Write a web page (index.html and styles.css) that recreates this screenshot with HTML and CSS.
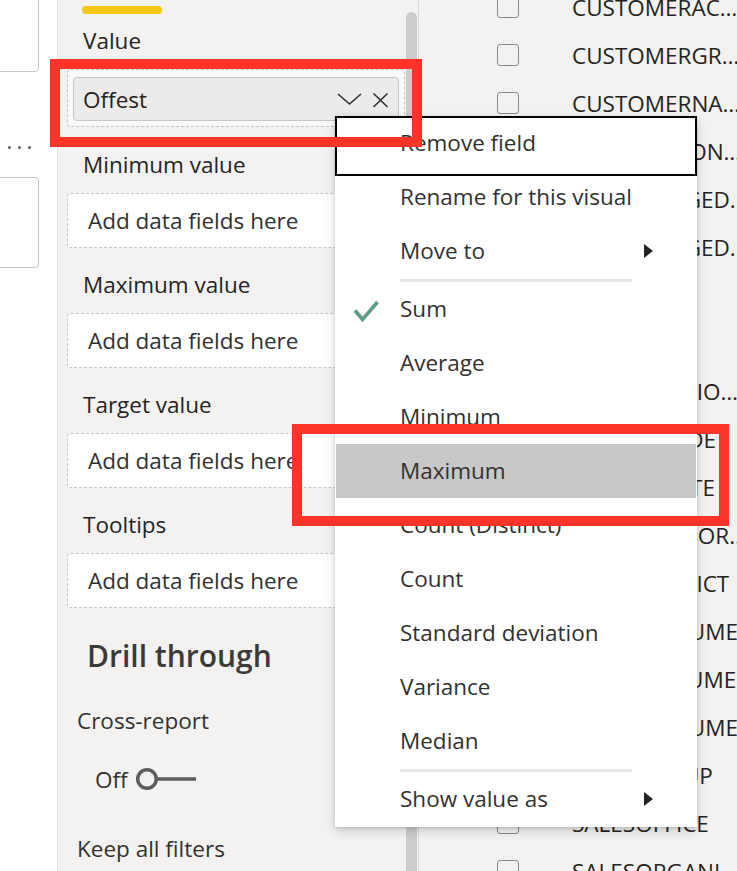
FILE: index.html
```html
<!DOCTYPE html>
<html lang="en">
<head>
<meta charset="utf-8">
<title>Field well menu</title>
<link rel="stylesheet" href="styles.css">
</head>
<body>
<div class="app">
  <aside class="strip">
    <div class="card card-top"></div>
    <div class="dots"><span></span><span></span><span></span></div>
    <div class="card card-bottom"></div>
  </aside>

  <section class="panel">
    <div class="panel-body">
      <div class="accent"></div>
      <div class="label label-first">Value</div>
      <div class="well well-filled">
        <div class="pill">
          <span class="pill-text">Offest</span>
          <svg class="pill-icons" width="52" height="18" viewBox="0 0 52 18">
            <polyline points="1,4 12.5,14 24,4" fill="none" stroke="#323130" stroke-width="1.6"/>
            <path d="M36.5 3.5 L50.5 17 M50.5 3.5 L36.5 17" stroke="#323130" stroke-width="1.6" fill="none"/>
          </svg>
        </div>
      </div>
      <div class="label">Minimum value</div>
      <div class="well">Add data fields here</div>
      <div class="label">Maximum value</div>
      <div class="well">Add data fields here</div>
      <div class="label">Target value</div>
      <div class="well">Add data fields here</div>
      <div class="label">Tooltips</div>
      <div class="well">Add data fields here</div>

      <div class="heading">Drill through</div>
      <div class="sublabel">Cross-report</div>
      <div class="toggle">
        <span class="toggle-text">Off</span>
        <svg width="62" height="24" viewBox="0 0 62 24">
          <circle cx="12" cy="12" r="9.3" fill="none" stroke="#605e5c" stroke-width="3.5"/>
          <line x1="21" y1="12" x2="61" y2="12" stroke="#605e5c" stroke-width="3.5"/>
        </svg>
      </div>
      <div class="sublabel sublabel-keep">Keep all filters</div>
    </div>
    <div class="scroll"><div class="thumb"></div></div>
  </section>

  <section class="fields">
    <ul class="field-list">
      <li class="field"><span class="box"></span><span class="name">CUSTOMERAC…</span></li>
      <li class="field"><span class="box"></span><span class="name">CUSTOMERGR…</span></li>
      <li class="field"><span class="box"></span><span class="name">CUSTOMERNA…</span></li>
      <li class="field"><span class="box"></span><span class="name">DISTRIBUTION…</span></li>
      <li class="field"><span class="box"></span><span class="name">LASTCHANGED…</span></li>
      <li class="field"><span class="box"></span><span class="name">LASTCHANGED…</span></li>
      <li class="field"><span class="box"></span><span class="name">MATERIAL</span></li>
      <li class="field"><span class="box"></span><span class="name">MONTH</span></li>
      <li class="field"><span class="box"></span><span class="name">ORGANIZATIO…</span></li>
      <li class="field"><span class="box"></span><span class="name">REGIONCODE</span></li>
      <li class="field"><span class="box"></span><span class="name">PRICINGDATE</span></li>
      <li class="field"><span class="box"></span><span class="name">SALESADVISOR…</span></li>
      <li class="field"><span class="box"></span><span class="name">SALESDISTRICT</span></li>
      <li class="field"><span class="box"></span><span class="name">ORDERVOLUME</span></li>
      <li class="field"><span class="box"></span><span class="name">GROSSVOLUME</span></li>
      <li class="field"><span class="box"></span><span class="name">ORDERVOLUME</span></li>
      <li class="field"><span class="box"></span><span class="name">SALESGROUP</span></li>
      <li class="field"><span class="box"></span><span class="name">SALESOFFICE</span></li>
      <li class="field"><span class="box"></span><span class="name">SALESORGANI…</span></li>
    </ul>
  </section>
</div>

<div class="menu">
  <div class="item item-focus">Remove field</div>
  <div class="item">Rename for this visual</div>
  <div class="item">Move to<span class="arrow"></span></div>
  <div class="sep"></div>
  <div class="item">
    <svg class="check" width="28" height="24" viewBox="0 0 28 24">
      <polyline points="3,11.5 10.5,20.5 25.5,3" fill="none" stroke="#5e9e89" stroke-width="3.6"/>
    </svg>Sum
  </div>
  <div class="item">Average</div>
  <div class="item">Minimum</div>
  <div class="item item-active">Maximum</div>
  <div class="item">Count (Distinct)</div>
  <div class="item">Count</div>
  <div class="item">Standard deviation</div>
  <div class="item">Variance</div>
  <div class="item">Median</div>
  <div class="sep"></div>
  <div class="item">Show value as<span class="arrow"></span></div>
</div>

<div class="mark mark-value"></div>
<div class="mark mark-max"></div>
</body>
</html>
```
FILE: styles.css
```css
* { box-sizing: border-box; }

html, body {
  margin: 0;
  padding: 0;
  width: 737px;
  height: 871px;
  overflow: hidden;
  background: #ffffff;
  font-family: "Open Sans", "Noto Sans", sans-serif;
  font-size: 22.5px;
  color: #252423;
}

.app {
  display: flex;
  width: 737px;
  height: 871px;
  overflow: hidden;
}

/* left strip */
.strip {
  width: 57px;
  flex: none;
  background: #ffffff;
}
.card {
  border: 1px solid #c8c6c4;
  border-radius: 4px;
  margin-left: -6px;
  width: 45px;
}
.card-top {
  margin-top: -12px;
  height: 84px;
}
.dots {
  display: flex;
  gap: 7px;
  padding-left: 8px;
  margin-top: 74px;
  height: 3px;
}
.dots span {
  width: 3px;
  height: 3px;
  border-radius: 50%;
  background: #605e5c;
}
.card-bottom {
  margin-top: 28px;
  height: 91px;
}

/* visualizations panel */
.panel {
  width: 362px;
  flex: none;
  display: flex;
  overflow: hidden;
  background: #f3f2f1;
  border-left: 1px solid #e1dfdd;
  border-right: 1px solid #dcdad8;
}
.panel-body {
  flex: 1;
  padding-top: 6px;
}
.accent {
  margin-left: 24px;
  width: 80px;
  height: 8px;
  border-radius: 4px;
  background: #f2c811;
}
.label {
  padding-left: 25px;
  line-height: 30px;
  height: 30px;
  margin-bottom: 13px;
  color: #252423;
}
.label-first { margin-top: 12px; }

.well {
  margin: 0 0 22px 9px;
  height: 55px;
  border: 1px dashed #c8c6c4;
  border-radius: 4px;
  background: #ffffff;
  padding-left: 20px;
  display: flex;
  align-items: center;
  color: #323130;
  white-space: nowrap;
}
.well-filled {
  height: 58px;
  margin-bottom: 23px;
  padding: 7px 5px 5px 5px;
  background: #faf9f8;
}
.pill {
  flex: 1;
  height: 44px;
  display: flex;
  align-items: center;
  background: #edebe9;
  border: 1px solid #c8c6c4;
  border-radius: 4px;
  padding: 0 9px;
}
.pill-text { color: #252423; }
.pill-icons { margin-left: auto; }

.heading {
  margin-top: 28px;
  padding-left: 29px;
  font-size: 30px;
  font-weight: 600;
  line-height: 40px;
  height: 40px;
  color: #3b3a39;
}
.sublabel {
  margin-top: 30px;
  padding-left: 19px;
  line-height: 30px;
  height: 30px;
  color: #323130;
}
.toggle {
  margin-top: 28px;
  height: 30px;
  padding-left: 37px;
  display: flex;
  align-items: center;
  gap: 7px;
  color: #323130;
}
.toggle svg { display: block; }
.sublabel-keep { margin-top: 40px; }

.scroll {
  width: 13px;
  flex: none;
  padding: 12px 1px 0 1px;
}
.thumb {
  width: 11px;
  height: 859px;
  background: #cfcdcb;
  border-radius: 6px 6px 0 0;
}

/* fields list */
.fields {
  flex: 1;
  background: #f3f2f1;
  overflow: hidden;
}
.field-list {
  list-style: none;
  margin: -17px 0 0 0;
  padding: 0;
}
.field {
  height: 48px;
  display: flex;
  align-items: center;
  padding-left: 78px;
  white-space: nowrap;
}
.box {
  width: 22px;
  height: 22px;
  flex: none;
  border: 1.5px solid #8a8886;
  border-radius: 3px;
}
.name {
  margin-left: 53px;
  color: #252423;
}

/* context menu */
.menu {
  position: absolute;
  left: 335px;
  top: 116px;
  width: 362px;
  padding-bottom: 1px;
  background: #ffffff;
  box-shadow: 0 4px 10px rgba(0, 0, 0, 0.16), 0 1px 3px rgba(0, 0, 0, 0.12);
}
.item {
  position: relative;
  height: 54px;
  display: flex;
  align-items: center;
  padding-left: 65px;
  padding-bottom: 2px;
  color: #323130;
  white-space: nowrap;
}
.item-focus::after {
  content: "";
  position: absolute;
  left: 0;
  right: 0;
  top: 0;
  height: 56px;
  border: 2px solid #000000;
}
.item-active {
  background: #c8c8c8;
  margin: 0 1px;
  padding-left: 64px;
}
.check {
  position: absolute;
  left: 17px;
  top: 17px;
}
.arrow {
  margin-left: auto;
  margin-right: 44px;
  margin-top: 2px;
  width: 0;
  height: 0;
  border-left: 9px solid #252423;
  border-top: 7.5px solid transparent;
  border-bottom: 7.5px solid transparent;
}
.sep {
  margin: 1px 0 0 65px;
  width: 232px;
  height: 3px;
  background: #e6e5e4;
}

/* annotation rectangles */
.mark {
  position: absolute;
  border: 10px solid #fe3428;
}
.mark-value {
  left: 50px;
  top: 59px;
  width: 372px;
  height: 88px;
}
.mark-max {
  left: 292px;
  top: 424px;
  width: 437px;
  height: 102px;
}
```
